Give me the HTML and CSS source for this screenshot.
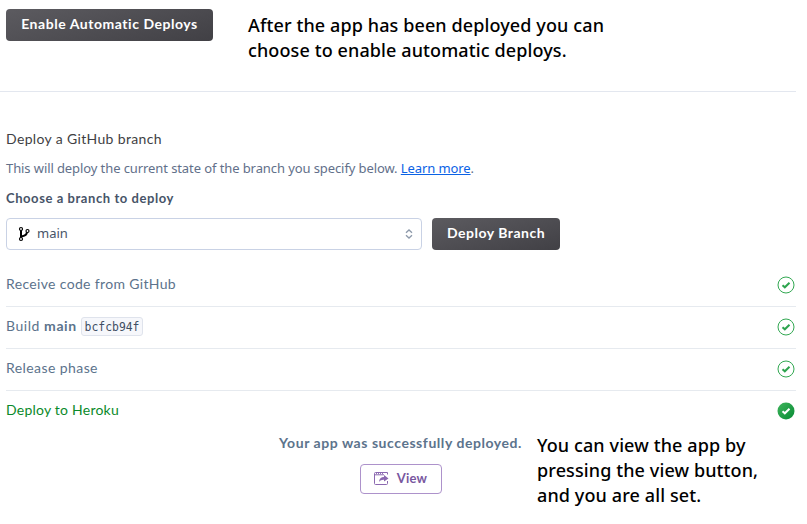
FILE: index.html
```
<!DOCTYPE html>
<html lang="en">
<head>
<meta charset="utf-8">
<title>Deploy</title>
<link rel="stylesheet" href="styles.css">
</head>
<body>
<svg class="defs" width="0" height="0" aria-hidden="true">
  <linearGradient id="green" x1="0" y1="0" x2="1" y2="1"><stop offset="0" stop-color="#3fb45c"/><stop offset="1" stop-color="#078b34"/></linearGradient>
  <symbol id="check" viewBox="0 0 18 18"><circle cx="9" cy="9" r="8" fill="none" stroke="#32a852"/><path d="M5.500 9.300 7.800 11.300 12.500 6.800" fill="none" stroke="#2da44e" stroke-width="2"/></symbol>
</svg>
<header class="automatic">
  <button class="btn btn-auto">Enable Automatic Deploys</button>
  <p class="note">After the app has been deployed you can<br>choose to enable automatic deploys.</p>
</header>
<main class="manual">
  <h2>Deploy a GitHub branch</h2>
  <p class="desc">This will deploy the current state of the branch you specify below. <a>Learn more</a>.</p>
  <label class="choose">Choose a branch to deploy</label>
  <div class="controls">
    <div class="select">
      <svg class="branch" width="12" height="16" viewBox="0 0 12 16"><g fill="none" stroke="#000"><path d="M3 4v8M3 10.500C8 10 9 8 9 5.800" stroke-width="2"/><g fill="#fff" stroke-width="1.200"><circle cx="3" cy="3" r="1.500"/><circle cx="3" cy="13" r="1.500"/><circle cx="9.500" cy="5" r="1.500"/></g></g></svg>
      <span class="value">main</span>
      <svg class="updown" width="8" height="10" viewBox="0 0 8 10"><path d="M1 3.800 4 1l3 2.800M1 6.200 4 9l3-2.800" fill="none" stroke="#8d99aa" stroke-width="1.300"/></svg>
    </div>
    <button class="btn btn-deploy">Deploy Branch</button>
  </div>
  <ul class="steps">
    <li><span>Receive code from GitHub</span><svg width="18" height="18"><use href="#check"/></svg></li>
    <li class="build"><span>Build <b>main</b></span><code>bcfcb94f</code><svg width="18" height="18"><use href="#check"/></svg></li>
    <li class="release"><span>Release phase</span><svg width="18" height="18"><use href="#check"/></svg></li>
    <li class="done"><span>Deploy to Heroku</span><svg width="18" height="18" viewBox="0 0 18 18"><circle cx="9" cy="9" r="8.500" fill="url(#green)"/><path d="M5.500 9.300 7.800 11.300 12.500 6.800" fill="none" stroke="#fff" stroke-width="2"/></svg></li>
  </ul>
</main>
<footer class="result">
  <div class="success">
    <p>Your app was successfully deployed.</p>
    <button class="view"><svg width="15" height="13" viewBox="0 0 15 13"><path d="M13.500 9v2.500a1 1 0 0 1-1 1h-11a1 1 0 0 1-1-1v-10a1 1 0 0 1 1-1h12v2M1 2.800h9" fill="none" stroke="#8b68b0"/><path d="M2 1.600h1m1 0h1m1 0h1m1 0h1" stroke="#8b68b0"/><path d="M5 10c.3-3.500 2-5 5-5V3l4.500 3.500L10 9.500V7.700C7.800 7.600 6.200 8.200 5 10z" fill="#8b68b0"/></svg><span>View</span></button>
  </div>
  <p class="note">You can view the app by<br>pressing the view button,<br>and you are all set.</p>
</footer>
</body>
</html>
```
FILE: styles.css
```
* { box-sizing: border-box; }
body { margin: 0; background: #fff; font-family: Lato, sans-serif; font-size: 14px; color: #5c738c; }
h2, p, ul { margin: 0; padding: 0; }
.defs { position: absolute; }
button { font: inherit; margin: 0; padding: 0; cursor: pointer; }
.automatic { width: 796px; height: 92px; border-bottom: 1px solid #e3e7ef; display: flex; padding: 9px 0 0 6px; }
.btn { height: 32px; border: 0; border-radius: 4px; background: linear-gradient(165deg, #5c5b60, #414045); color: #fff; font-weight: 700; letter-spacing: .54px; padding-bottom: 3px; }
.btn-auto { width: 207px; }
.btn-deploy { width: 128px; margin-left: 10px; letter-spacing: .5px; }
.note { font: 500 18px/25px "Noto Sans", sans-serif; letter-spacing: .11px; color: #000; white-space: nowrap; }
.automatic .note { margin: 4px 0 0 35px; }
.manual { width: 796px; padding: 37px 0 0 6px; }
h2 { font-size: 14px; line-height: 20px; font-weight: 400; letter-spacing: .35px; color: #3f3f44; }
.desc { font: 13px/20px "Noto Sans", sans-serif; letter-spacing: -.092px; margin-top: 9px; color: #62708a; }
.desc a { color: #0b62e5; text-decoration: underline; }
.choose { display: block; margin-top: 10px; font-size: 13px; line-height: 20px; font-weight: 700; letter-spacing: .57px; color: #475468; }
.controls { display: flex; margin-top: 10px; }
.select { width: 416px; height: 32px; border: 1px solid #c9d2e5; border-radius: 4px; display: flex; align-items: center; padding: 0 8px 0 11px; color: #475468; font: 13px "Noto Sans", sans-serif; }
.value { margin: 0 0 2px 7px; }
.updown { margin-left: auto; }
.steps { list-style: none; margin-top: 15px; }
.steps li { height: 42px; display: flex; align-items: center; padding: 0 1px 2px 0; border-bottom: 1px solid #e6eaef; letter-spacing: .34px; }
.steps li > span { padding-bottom: 2px; }
.steps li > svg { margin-left: auto; }
.steps .build { letter-spacing: .55px; }
.steps .release { letter-spacing: .42px; }
.steps li.done { border-color: transparent; color: #0b8a2a; letter-spacing: .23px; }
code { height: 19px; margin-left: 4px; padding: 0 3px; border: 1px solid #dfe3ec; border-radius: 3px; background: #f6f7fb; color: #3f4e63; font: 11.400px/18px "DejaVu Sans Mono", monospace; letter-spacing: 0; }
.result { display: flex; padding-left: 279px; }
.success { width: 243px; padding-top: 1px; text-align: center; white-space: nowrap; font-weight: 700; letter-spacing: .55px; }
.result .note { margin-left: 15px; }
.view { width: 82px; height: 30px; margin-top: 13px; border: 1px solid #ad92cb; border-radius: 4px; background: #fff; color: #79589f; display: inline-flex; align-items: center; justify-content: center; gap: 8px; font-size: 13px; letter-spacing: .2px; font-weight: 700; }
.view svg, .view span { margin-bottom: 2px; }
```
